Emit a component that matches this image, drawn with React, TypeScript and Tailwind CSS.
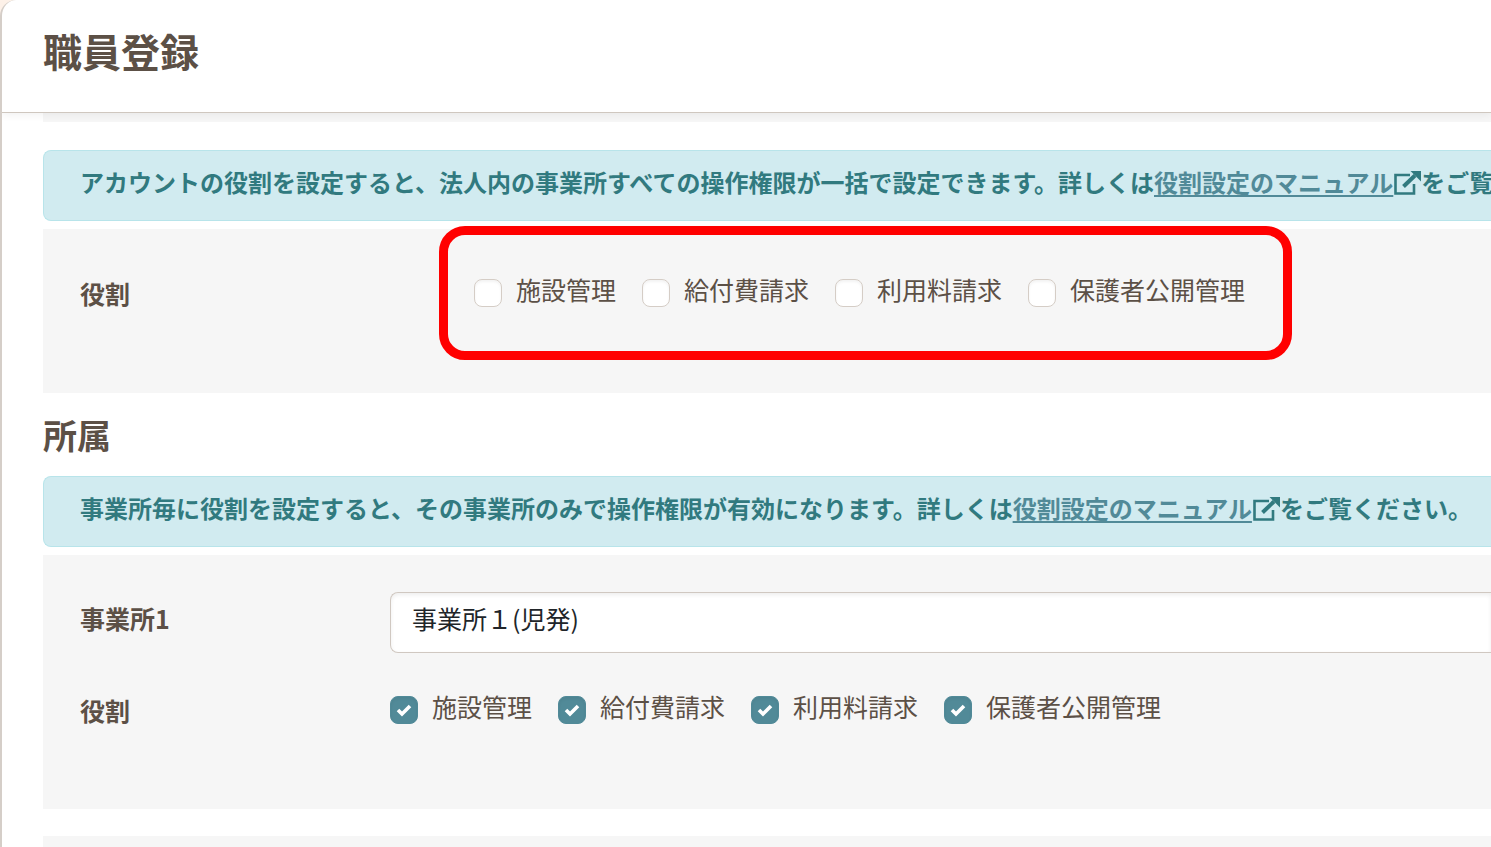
import { ReactNode, useState } from 'react';

const ROLES = ['施設管理', '給付費請求', '利用料請求', '保護者公開管理'];

function ExternalIcon() {
  return (
    <svg viewBox="0 0 28 26" className="inline-block w-7 h-[26px] align-[-4px]" fill="none" aria-hidden="true">
      <path d="M17 5H2.5v18.5h18.500V14" stroke="currentColor" strokeWidth="2.6" />
      <path d="M10.500 16.500L22 5.500" stroke="currentColor" strokeWidth="4" />
      <path d="M17.500 1H28v10.500z" fill="currentColor" />
    </svg>
  );
}

function Notice({ children }: { children: ReactNode }) {
  return (
    <div className="h-[71px] pl-9 flex items-center rounded-l-lg border border-r-0 border-[#b8e4ea] bg-[#d1ebf0] overflow-hidden">
      <p className="pb-[7px] text-2xl font-bold text-[#317a7f] whitespace-nowrap">
        {children}
        <a href="#manual" className="text-[#518a98] underline decoration-2 underline-offset-3">
          役割設定のマニュアル
        </a>
        <ExternalIcon />
        をご覧ください。
      </p>
    </div>
  );
}

interface RoleChecksProps {
  prefix: string;
  labelledBy: string;
  initial: boolean;
}

function RoleChecks({ prefix, labelledBy, initial }: RoleChecksProps) {
  const [checked, setChecked] = useState(ROLES.map(() => initial));

  const toggle = (index: number) => {
    setChecked(checked.map((value, i) => (i === index ? !value : value)));
  };

  return (
    <div role="group" aria-labelledby={labelledBy} className="flex gap-[26px]">
      {ROLES.map((role, i) => (
        <div key={role} className="flex items-center gap-[14px]">
          <span className="relative block w-7 h-7">
            <input
              id={`${prefix}-${i}`}
              type="checkbox"
              checked={checked[i]}
              onChange={() => toggle(i)}
              className="peer block appearance-none w-7 h-7 rounded-lg border-1 border-[#d5cdc6] bg-white shadow-[inset_0_2px_3px_#0000000d] checked:border-[#518a98] checked:bg-[#518a98]"
            />
            <svg
              viewBox="0 0 28 28"
              className="absolute inset-0 hidden peer-checked:block pointer-events-none"
              fill="none"
              aria-hidden="true"
            >
              <path d="M8 14l4 4 8-8" stroke="white" strokeWidth="3.600" />
            </svg>
          </span>
          <label htmlFor={`${prefix}-${i}`} className="pb-2 text-[25px] leading-7 whitespace-nowrap">
            {role}
          </label>
        </div>
      ))}
    </div>
  );
}

export default function App() {
  const [office, setOffice] = useState('1');

  return (
    <div className="min-h-screen flex bg-[#fdf1e8] overflow-hidden">
      <div className="flex-1 min-w-0 flex flex-col rounded-tl-2xl border-l-2 border-l-[#d5cec8] bg-white text-[#5c5046] font-['Noto_Sans_CJK_JP',sans-serif] overflow-hidden">
        {/* ヘッダー */}
        <header className="relative z-10 h-[113px] pl-[41px] pb-3 flex items-center border-b border-[#cfc7bf] shadow-[0_2px_8px_#0000000f] flex-shrink-0">
          <h1 className="text-[39px] font-bold">職員登録</h1>
        </header>

        <main className="flex-1 flex flex-col pl-[41px]">
          <div className="h-[9px] bg-[#f6f6f6]" />

          {/* アカウントの役割 */}
          <section className="mt-7">
            <Notice>
              アカウントの役割を設定すると、法人内の事業所すべての操作権限が一括で設定できます。詳しくは
            </Notice>
            <div className="mt-2 h-41 pl-[37px] pt-[46px] flex items-start bg-[#f6f6f6]">
              <span id="account-role" className="w-[394px] text-[25px] leading-9 font-bold flex-shrink-0">
                役割
              </span>
              <div className="relative">
                <RoleChecks prefix="account" labelledBy="account-role" initial={false} />
                {/* 強調枠 */}
                <div className="absolute -top-[49px] -bottom-[49px] -left-[35px] -right-[47px] rounded-[26px] border-[9px] border-[#ff0000] pointer-events-none" />
              </div>
            </div>
          </section>

          {/* 所属 */}
          <section>
            <h2 className="h-[83px] pt-[18px] text-[34px] leading-12 font-bold">所属</h2>
            <Notice>事業所毎に役割を設定すると、その事業所のみで操作権限が有効になります。詳しくは</Notice>
            <div className="mt-2 h-[254px] pl-[37px] pt-[37px] bg-[#f6f6f6]">
              <div className="flex items-center">
                <label htmlFor="office" className="w-[310px] pb-[7px] text-[25px] font-bold flex-shrink-0">
                  事業所1
                </label>
                <select
                  id="office"
                  value={office}
                  onChange={(e) => setOffice(e.target.value)}
                  className="appearance-none flex-1 min-w-0 h-[61px] pl-[21px] pb-[7px] rounded-l-lg border border-r-0 border-[#d0c8c1] bg-white text-[25px] text-[#212529] shadow-[inset_0_2px_4px_#00000012]"
                >
                  <option value="1">事業所１(児発)</option>
                </select>
              </div>
              <div className="mt-[39px] flex items-start">
                <span id="office-role" className="w-[310px] text-[25px] leading-9 font-bold flex-shrink-0">
                  役割
                </span>
                <RoleChecks prefix="office" labelledBy="office-role" initial={true} />
              </div>
            </div>
          </section>

          <div className="mt-[27px] flex-1 bg-[#f6f6f6]" />
        </main>
      </div>
    </div>
  );
}
